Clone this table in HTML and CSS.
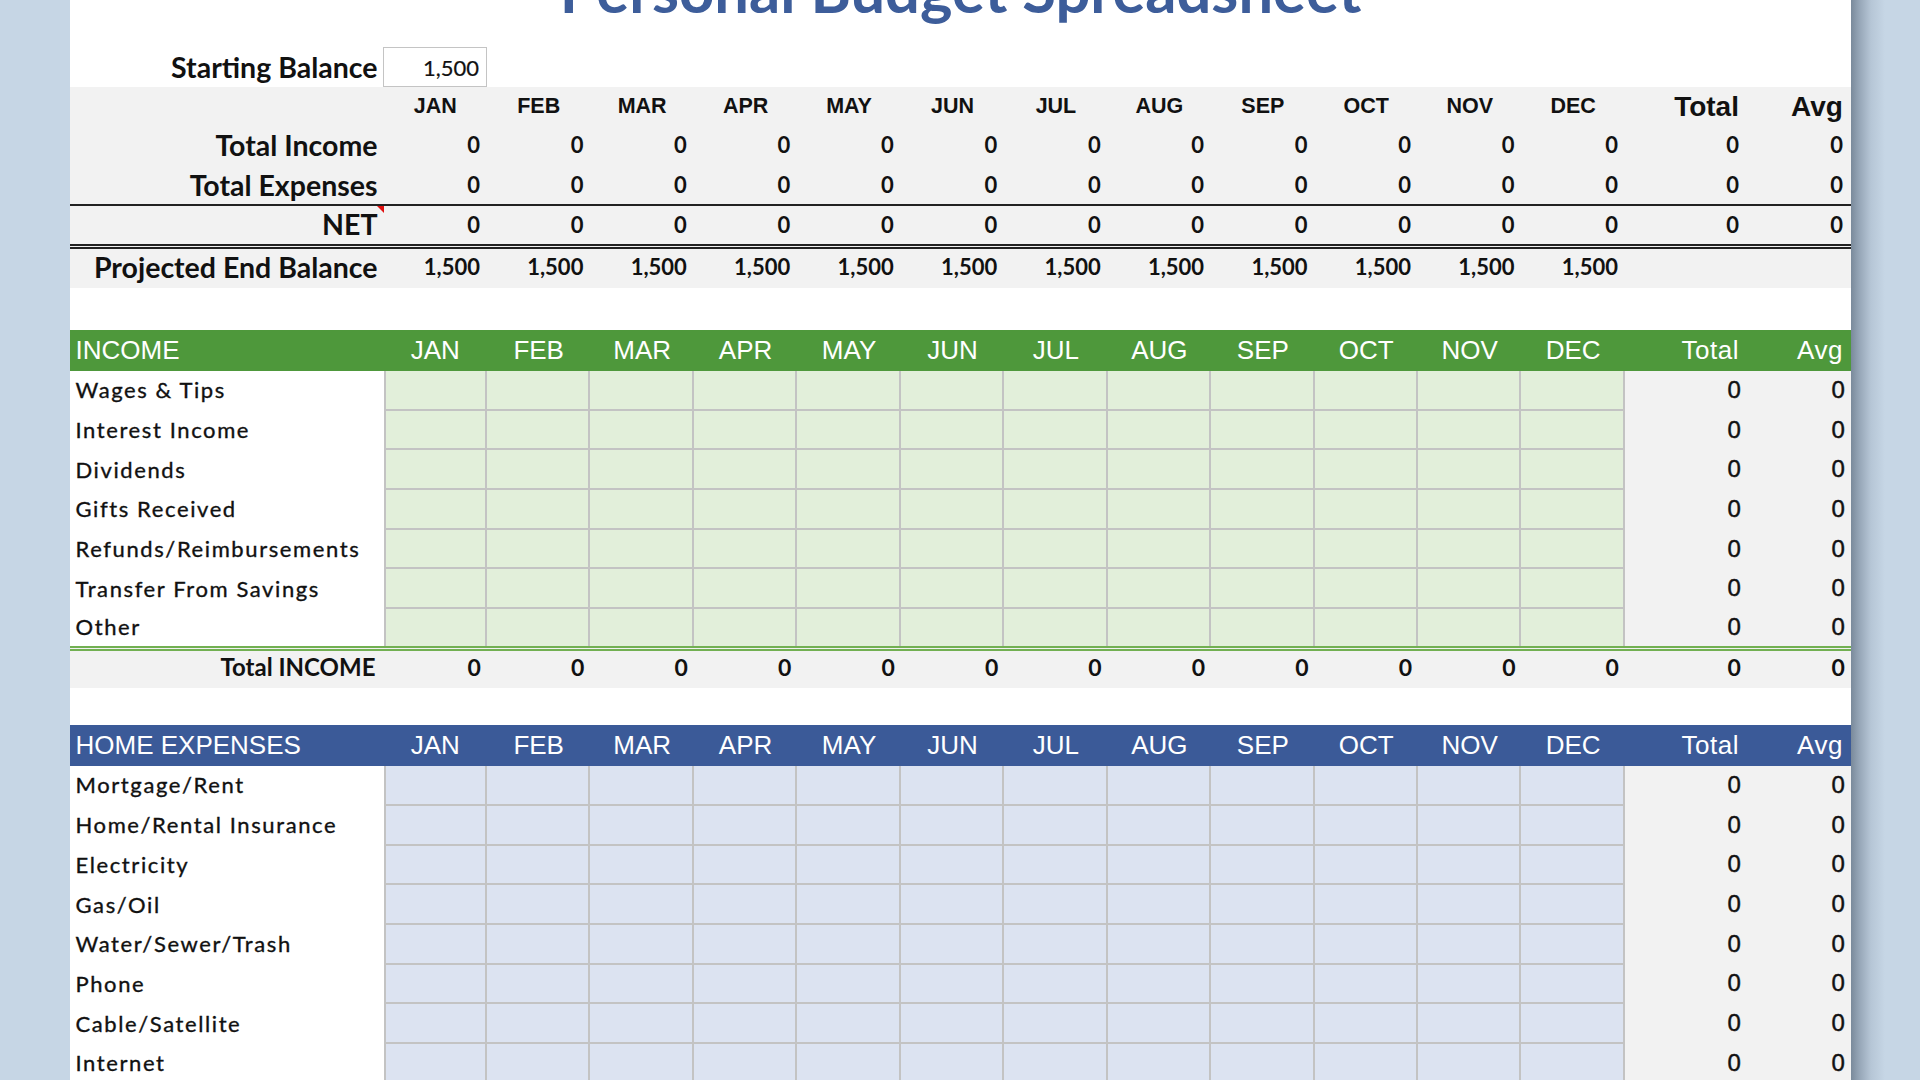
FILE: index.html
```html
<!DOCTYPE html>
<html lang="en">
<head>
<meta charset="utf-8">
<title>Personal Budget Spreadsheet</title>
<link rel="stylesheet" href="styles.css">
</head>
<body>
<div class="screen">
  <div class="gutter-left"></div>
  <main class="sheet">
    <header class="title-band">
      <h1 class="title">Personal Budget Spreadsheet</h1>
    </header>

    <div class="row start">
      <div class="c r slab">Starting Balance</div>
      <div class="c r sb-box">1,500</div>
    </div>

    <section class="summary">
      <div class="row sum-head">
        <div class="c"></div>
        <div class="c ctr mh">JAN</div><div class="c ctr mh">FEB</div><div class="c ctr mh">MAR</div><div class="c ctr mh">APR</div><div class="c ctr mh">MAY</div><div class="c ctr mh">JUN</div><div class="c ctr mh">JUL</div><div class="c ctr mh">AUG</div><div class="c ctr mh">SEP</div><div class="c ctr mh">OCT</div><div class="c ctr mh">NOV</div><div class="c ctr mh">DEC</div>
        <div class="c r th">Total</div><div class="c r th">Avg</div>
      </div>
      <div class="row sum-row">
        <div class="c r slab">Total Income</div>
        <div class="c r sn">0</div><div class="c r sn">0</div><div class="c r sn">0</div><div class="c r sn">0</div><div class="c r sn">0</div><div class="c r sn">0</div><div class="c r sn">0</div><div class="c r sn">0</div><div class="c r sn">0</div><div class="c r sn">0</div><div class="c r sn">0</div><div class="c r sn">0</div>
        <div class="c r sn st">0</div><div class="c r sn st">0</div>
      </div>
      <div class="row sum-row exp">
        <div class="c r slab">Total Expenses</div>
        <div class="c r sn">0</div><div class="c r sn">0</div><div class="c r sn">0</div><div class="c r sn">0</div><div class="c r sn">0</div><div class="c r sn">0</div><div class="c r sn">0</div><div class="c r sn">0</div><div class="c r sn">0</div><div class="c r sn">0</div><div class="c r sn">0</div><div class="c r sn">0</div>
        <div class="c r sn st">0</div><div class="c r sn st">0</div>
      </div>
      <div class="row sum-row net">
        <div class="c r slab note">NET<span class="comment-mark"></span></div>
        <div class="c r sn">0</div><div class="c r sn">0</div><div class="c r sn">0</div><div class="c r sn">0</div><div class="c r sn">0</div><div class="c r sn">0</div><div class="c r sn">0</div><div class="c r sn">0</div><div class="c r sn">0</div><div class="c r sn">0</div><div class="c r sn">0</div><div class="c r sn">0</div>
        <div class="c r sn st">0</div><div class="c r sn st">0</div>
      </div>
      <div class="row sum-row proj">
        <div class="c r slab">Projected End Balance</div>
        <div class="c r sn">1,500</div><div class="c r sn">1,500</div><div class="c r sn">1,500</div><div class="c r sn">1,500</div><div class="c r sn">1,500</div><div class="c r sn">1,500</div><div class="c r sn">1,500</div><div class="c r sn">1,500</div><div class="c r sn">1,500</div><div class="c r sn">1,500</div><div class="c r sn">1,500</div><div class="c r sn">1,500</div>
        <div class="c"></div><div class="c"></div>
      </div>
    </section>

    <section class="block income">
      <div class="row bar">
        <div class="c bar-title">INCOME</div>
        <div class="c ctr">JAN</div><div class="c ctr">FEB</div><div class="c ctr">MAR</div><div class="c ctr">APR</div><div class="c ctr">MAY</div><div class="c ctr">JUN</div><div class="c ctr">JUL</div><div class="c ctr">AUG</div><div class="c ctr">SEP</div><div class="c ctr">OCT</div><div class="c ctr">NOV</div><div class="c ctr">DEC</div>
        <div class="c r bt">Total</div><div class="c r bt">Avg</div>
      </div>
      <div class="row item">
        <div class="c lab">Wages &amp; Tips</div>
        <div class="in"></div><div class="in"></div><div class="in"></div><div class="in"></div><div class="in"></div><div class="in"></div><div class="in"></div><div class="in"></div><div class="in"></div><div class="in"></div><div class="in"></div><div class="in"></div>
        <div class="c r tv">0</div><div class="c r tv">0</div>
      </div>
      <div class="row item">
        <div class="c lab">Interest Income</div>
        <div class="in"></div><div class="in"></div><div class="in"></div><div class="in"></div><div class="in"></div><div class="in"></div><div class="in"></div><div class="in"></div><div class="in"></div><div class="in"></div><div class="in"></div><div class="in"></div>
        <div class="c r tv">0</div><div class="c r tv">0</div>
      </div>
      <div class="row item">
        <div class="c lab">Dividends</div>
        <div class="in"></div><div class="in"></div><div class="in"></div><div class="in"></div><div class="in"></div><div class="in"></div><div class="in"></div><div class="in"></div><div class="in"></div><div class="in"></div><div class="in"></div><div class="in"></div>
        <div class="c r tv">0</div><div class="c r tv">0</div>
      </div>
      <div class="row item">
        <div class="c lab">Gifts Received</div>
        <div class="in"></div><div class="in"></div><div class="in"></div><div class="in"></div><div class="in"></div><div class="in"></div><div class="in"></div><div class="in"></div><div class="in"></div><div class="in"></div><div class="in"></div><div class="in"></div>
        <div class="c r tv">0</div><div class="c r tv">0</div>
      </div>
      <div class="row item">
        <div class="c lab">Refunds/Reimbursements</div>
        <div class="in"></div><div class="in"></div><div class="in"></div><div class="in"></div><div class="in"></div><div class="in"></div><div class="in"></div><div class="in"></div><div class="in"></div><div class="in"></div><div class="in"></div><div class="in"></div>
        <div class="c r tv">0</div><div class="c r tv">0</div>
      </div>
      <div class="row item">
        <div class="c lab">Transfer From Savings</div>
        <div class="in"></div><div class="in"></div><div class="in"></div><div class="in"></div><div class="in"></div><div class="in"></div><div class="in"></div><div class="in"></div><div class="in"></div><div class="in"></div><div class="in"></div><div class="in"></div>
        <div class="c r tv">0</div><div class="c r tv">0</div>
      </div>
      <div class="row item last">
        <div class="c lab">Other</div>
        <div class="in"></div><div class="in"></div><div class="in"></div><div class="in"></div><div class="in"></div><div class="in"></div><div class="in"></div><div class="in"></div><div class="in"></div><div class="in"></div><div class="in"></div><div class="in"></div>
        <div class="c r tv">0</div><div class="c r tv">0</div>
      </div>
      <div class="row total-row">
        <div class="c r tlab">Total INCOME</div>
        <div class="c r tn">0</div><div class="c r tn">0</div><div class="c r tn">0</div><div class="c r tn">0</div><div class="c r tn">0</div><div class="c r tn">0</div><div class="c r tn">0</div><div class="c r tn">0</div><div class="c r tn">0</div><div class="c r tn">0</div><div class="c r tn">0</div><div class="c r tn">0</div>
        <div class="c r tn">0</div><div class="c r tn">0</div>
      </div>
    </section>

    <section class="block home">
      <div class="row bar">
        <div class="c bar-title">HOME EXPENSES</div>
        <div class="c ctr">JAN</div><div class="c ctr">FEB</div><div class="c ctr">MAR</div><div class="c ctr">APR</div><div class="c ctr">MAY</div><div class="c ctr">JUN</div><div class="c ctr">JUL</div><div class="c ctr">AUG</div><div class="c ctr">SEP</div><div class="c ctr">OCT</div><div class="c ctr">NOV</div><div class="c ctr">DEC</div>
        <div class="c r bt">Total</div><div class="c r bt">Avg</div>
      </div>
      <div class="row item">
        <div class="c lab">Mortgage/Rent</div>
        <div class="in"></div><div class="in"></div><div class="in"></div><div class="in"></div><div class="in"></div><div class="in"></div><div class="in"></div><div class="in"></div><div class="in"></div><div class="in"></div><div class="in"></div><div class="in"></div>
        <div class="c r tv">0</div><div class="c r tv">0</div>
      </div>
      <div class="row item">
        <div class="c lab">Home/Rental Insurance</div>
        <div class="in"></div><div class="in"></div><div class="in"></div><div class="in"></div><div class="in"></div><div class="in"></div><div class="in"></div><div class="in"></div><div class="in"></div><div class="in"></div><div class="in"></div><div class="in"></div>
        <div class="c r tv">0</div><div class="c r tv">0</div>
      </div>
      <div class="row item">
        <div class="c lab">Electricity</div>
        <div class="in"></div><div class="in"></div><div class="in"></div><div class="in"></div><div class="in"></div><div class="in"></div><div class="in"></div><div class="in"></div><div class="in"></div><div class="in"></div><div class="in"></div><div class="in"></div>
        <div class="c r tv">0</div><div class="c r tv">0</div>
      </div>
      <div class="row item">
        <div class="c lab">Gas/Oil</div>
        <div class="in"></div><div class="in"></div><div class="in"></div><div class="in"></div><div class="in"></div><div class="in"></div><div class="in"></div><div class="in"></div><div class="in"></div><div class="in"></div><div class="in"></div><div class="in"></div>
        <div class="c r tv">0</div><div class="c r tv">0</div>
      </div>
      <div class="row item">
        <div class="c lab">Water/Sewer/Trash</div>
        <div class="in"></div><div class="in"></div><div class="in"></div><div class="in"></div><div class="in"></div><div class="in"></div><div class="in"></div><div class="in"></div><div class="in"></div><div class="in"></div><div class="in"></div><div class="in"></div>
        <div class="c r tv">0</div><div class="c r tv">0</div>
      </div>
      <div class="row item">
        <div class="c lab">Phone</div>
        <div class="in"></div><div class="in"></div><div class="in"></div><div class="in"></div><div class="in"></div><div class="in"></div><div class="in"></div><div class="in"></div><div class="in"></div><div class="in"></div><div class="in"></div><div class="in"></div>
        <div class="c r tv">0</div><div class="c r tv">0</div>
      </div>
      <div class="row item">
        <div class="c lab">Cable/Satellite</div>
        <div class="in"></div><div class="in"></div><div class="in"></div><div class="in"></div><div class="in"></div><div class="in"></div><div class="in"></div><div class="in"></div><div class="in"></div><div class="in"></div><div class="in"></div><div class="in"></div>
        <div class="c r tv">0</div><div class="c r tv">0</div>
      </div>
      <div class="row item">
        <div class="c lab">Internet</div>
        <div class="in"></div><div class="in"></div><div class="in"></div><div class="in"></div><div class="in"></div><div class="in"></div><div class="in"></div><div class="in"></div><div class="in"></div><div class="in"></div><div class="in"></div><div class="in"></div>
        <div class="c r tv">0</div><div class="c r tv">0</div>
      </div>
    </section>
  </main>
  <div class="gutter-right"></div>
</div>
</body>
</html>
```
FILE: styles.css
```css
* { box-sizing: border-box; }
html, body { margin: 0; padding: 0; height: 100%; overflow: hidden; }
body {
  background: #c6d6e5;
  font-family: "Lato", "Liberation Sans", sans-serif;
  color: #111;
}
.screen { display: flex; height: 1080px; }
.gutter-left { width: 70px; flex: none; background: #c6d6e5; }
.sheet { width: 1781px; flex: none; height: 1080px; overflow: hidden; background: #fff; }
.gutter-right {
  flex: 1;
  background: linear-gradient(to right, #7a8a9b 0, #95a5b6 8px, #b6c6d6 20px, #c6d6e5 34px);
}

.row {
  display: grid;
  grid-template-columns: 313.5px repeat(12, 103.46px) 122px 104px;
}
.c { display: flex; align-items: center; white-space: nowrap; min-width: 0; }
.r { justify-content: flex-end; }
.ctr { justify-content: center; }

/* title */
.title-band { display: flow-root; height: 47px; text-align: center; }
.title {
  margin: -41px 0 0;
  font: 700 61.5px/1 "Lato", sans-serif;
  color: #3d5d9a;
}

/* starting balance */
.start { height: 40px; }
.slab { font-weight: 700; font-size: 28.5px; padding-right: 6px; }
.sb-box {
  border: 1px solid #c4c4c4;
  background: #fff;
  font-size: 22px;
  padding-right: 7px;
  margin-left: -1px;
  -webkit-text-stroke: 0.2px #111;
}

/* summary */
.summary { background: #f2f2f2; }
.sum-head { height: 39px; }
.sum-row { height: 40px; padding-bottom: 3px; }
.sum-row.exp { height: 38px; padding-bottom: 1px; }
.sum-row.net { height: 45px; padding-bottom: 2px; border-top: 2px solid #222; border-bottom: 5px double #222; }
.sum-row.proj { height: 39px; padding-bottom: 4px; }
.mh { font: 700 21.5px "Liberation Sans", Arial, sans-serif; }
.th { font: 700 28px "Liberation Sans", Arial, sans-serif; padding-right: 8px; }
.sn { font-weight: 700; font-size: 22px; padding-right: 7px; }
.sn.st { padding-right: 8px; }
.note { position: relative; }
.comment-mark {
  position: absolute;
  top: 0;
  right: 0;
  width: 0;
  height: 0;
  border-top: 7px solid #e01010;
  border-left: 7px solid transparent;
}

/* data blocks */
.block { margin-top: 42px; }
.block.home { margin-top: 37px; }
.bar {
  height: 41px;
  color: #fff;
  font: 400 26px "Liberation Sans", Arial, sans-serif;
  padding-bottom: 1px;
}
.income .bar { background: #4e983b; }
.home .bar { background: #3b5a98; }
.bar-title { padding-left: 5.5px; }
.bt { padding-right: 8px; letter-spacing: 0.5px; }

.item { height: 39.7px; }
.item.last { height: 37px; }
.lab {
  background: #fff;
  font-size: 22px;
  letter-spacing: 1.6px;
  padding-left: 5.5px;
  padding-bottom: 2px;
  -webkit-text-stroke: 0.35px #111;
}
.in { border-right: 2px solid #c3c3c3; border-bottom: 2px solid #c3c3c3; }
.lab + .in { border-left: 2px solid #c3c3c3; }
.item.last .in { border-bottom: 0; }
.income .in { background: #e2efda; }
.home .in { background: #dce3f1; }
.tv {
  background: #f2f2f2;
  font: 400 24px "Liberation Sans", Arial, sans-serif;
  padding-right: 6px;
  padding-bottom: 2px;
  -webkit-text-stroke: 0.45px #111;
}

.total-row {
  height: 42px;
  padding-bottom: 6px;
  background: #f2f2f2;
  border-top: 5px double #72b052;
}
.tlab { font-weight: 700; font-size: 24px; padding-right: 8px; }
.tn { font-weight: 700; font-size: 23px; padding-right: 6px; }
```
